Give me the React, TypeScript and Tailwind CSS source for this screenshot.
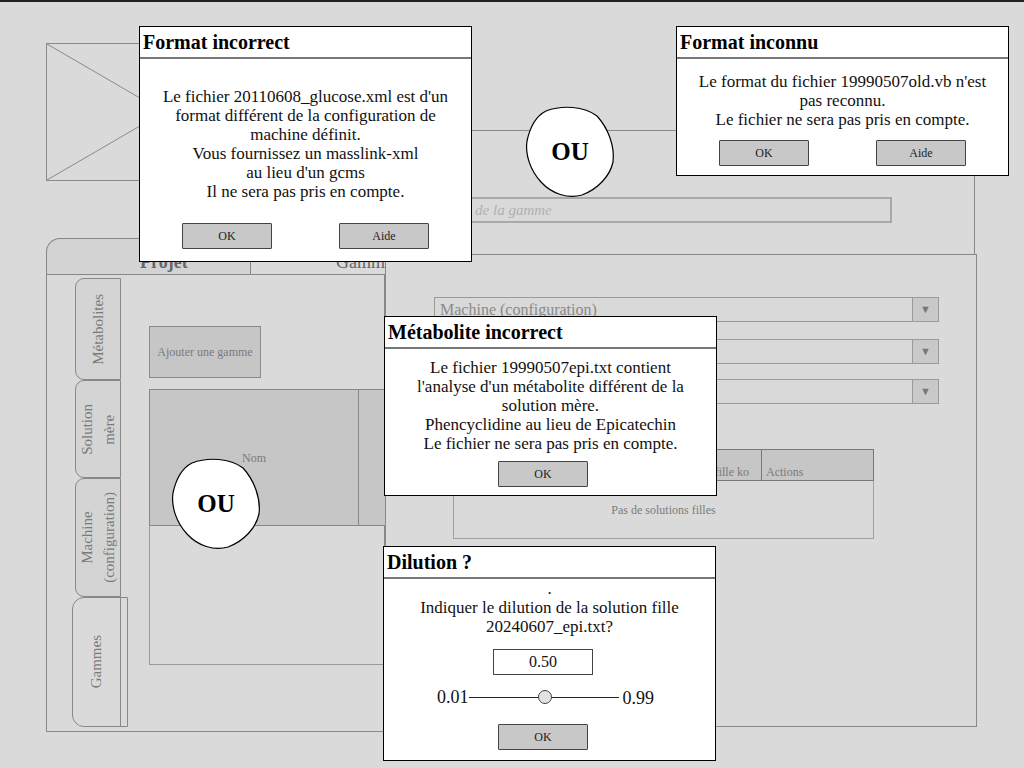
import React from 'react';

const Btn = ({ label, className = '' }: { label: string; className?: string }) => (
  <div className={`w-[90px] h-[26px] flex items-center justify-center bg-[#c8c8c8] border-[1.5px] border-[#444] rounded-[1px] text-[12px] text-[#222] ${className}`}>
    {label}
  </div>
);

const Dialog = ({ title, className, children }: { title: string; className: string; children: React.ReactNode }) => (
  <div className={`absolute bg-white border border-black flex flex-col ${className}`}>
    <div className="h-[32px] shrink-0 border-b-2 border-[#777] pl-[3px] flex items-center text-[20px] font-bold text-black leading-none">
      {title}
    </div>
    {children}
  </div>
);

const Blob = ({ className }: { className: string }) => (
  <div className={`absolute w-[92px] h-[95px] flex items-center justify-center ${className}`}>
    <svg className="absolute inset-0" width="92" height="95" viewBox="0 0 92 95">
      <path
        d="M 22 7 C 38 1, 60 2, 73 12 C 84 24, 91 42, 89 58 C 86 72, 74 85, 58 91 C 44 95, 28 90, 17 78 C 6 66, 1 50, 3 37 C 6 23, 12 12, 22 7 Z"
        fill="white"
        stroke="black"
        strokeWidth="1.2"
      />
    </svg>
    <span className="relative text-[25px] font-bold text-black">OU</span>
  </div>
);

const VTab = ({ lines, className = '' }: { lines: string[]; className?: string }) => (
  <div className={`w-[46px] border border-[#888] rounded-l-[9px] flex items-center justify-center bg-[#d4d4d4] ${className}`}>
    <div className="[writing-mode:vertical-rl] rotate-180 text-center text-[15px] leading-[22px] text-[#7a7a7a]">
      {lines.map((l) => (
        <div key={l}>{l}</div>
      ))}
    </div>
  </div>
);

const Combo = ({ label, className = '' }: { label?: string; className?: string }) => (
  <div className={`w-[505px] h-[25px] flex border border-[#9a9a9a] bg-[#d9d9d9] ${className}`}>
    <div className="flex-1 pl-[5px] text-[16px] leading-[24px] text-[#8a8a8a] overflow-hidden">{label}</div>
    <div className="w-[26px] border-l border-[#9a9a9a] bg-[#c9c9c9] flex items-center justify-center text-[11px] text-[#777]">▼</div>
  </div>
);

export default function App() {
  return (
    <div className="relative w-[1024px] h-[768px] overflow-hidden bg-[#dadada] border-t-2 border-[#222] font-['Liberation_Serif',serif]">
      {/* background mockup */}
      <div className="flex pl-[46px]">
        <div className="w-[339px] shrink-0 flex flex-col pt-[41px] overflow-hidden">
          <div className="w-[236px] h-[138px] border border-[#8a8a8a]">
            <svg width="234" height="136" viewBox="0 0 234 136">
              <line x1="0" y1="0" x2="234" y2="136" stroke="#8a8a8a" strokeWidth="1" />
              <line x1="0" y1="136" x2="234" y2="0" stroke="#8a8a8a" strokeWidth="1" />
            </svg>
          </div>
          <div className="mt-[57px] h-[36px] flex">
            <div className="w-[205px] shrink-0 h-full border-l border-t border-r border-[#888] rounded-tl-[14px] bg-[#d3d3d3] pl-[93px] pt-[14px] text-[18px] font-bold text-[#666] leading-none">
              Projet
            </div>
            <div className="flex-1 min-w-0 h-full border-t border-[#888] pl-[85px] pt-[14px] text-[18px] text-[#666] leading-none whitespace-nowrap overflow-hidden">
              Gammes
            </div>
          </div>
          <div className="h-[458px] border border-[#888] flex">
            <div className="w-[46px] shrink-0 ml-[28px] mt-[3px] flex flex-col">
              <VTab lines={['Métabolites']} className="h-[102px]" />
              <VTab lines={['Solution', 'mère']} className="h-[98px]" />
              <VTab lines={['Machine', '(configuration)']} className="h-[119px]" />
              <div className="h-[130px] -ml-[3px] w-[56px] shrink-0 flex border border-[#888] rounded-l-[12px]">
                <div className="flex-1 flex items-center justify-center">
                  <div className="[writing-mode:vertical-rl] rotate-180 text-[15px] text-[#7a7a7a]">Gammes</div>
                </div>
                <div className="w-[7px] border-l border-[#888]" />
              </div>
            </div>
            <div className="ml-[28px] pt-[51px] flex flex-col">
              <div className="w-[112px] h-[52px] bg-[#c6c6c6] border border-[#8a8a8a] flex items-center justify-center text-[12px] text-[#7a7a7a]">
                Ajouter une gamme
              </div>
              <div className="mt-[11px] w-[260px]">
                <div className="h-[137px] flex bg-[#c6c6c6] border border-[#888]">
                  <div className="w-[209px] border-r border-[#888] flex items-center justify-center text-[12px] text-[#7a7a7a]">Nom</div>
                  <div className="flex-1" />
                </div>
                <div className="h-[139px] border-l border-r border-b border-[#999]" />
              </div>
            </div>
          </div>
        </div>

        <div className="w-[592px] shrink-0 flex flex-col pt-[128px]">
          <div className="w-[590px] h-[124px] border-t border-l border-r border-[#888] pl-[47px] pt-[66px]">
            <div className="w-[459px] h-[26px] border-2 border-[#a8a8a8] pl-[8px] text-[15px] italic leading-[22px] text-[#b0b0b0]">
              Nom de la gamme
            </div>
          </div>
          <div className="h-[473px] border border-[#888] pl-[48px] pt-[42px] flex flex-col">
            <Combo label="Machine (configuration)" />
            <Combo className="mt-[17px]" />
            <Combo className="mt-[15px]" />
            <div className="mt-[45px] ml-[19px] w-[421px]">
              <div className="h-[32px] flex bg-[#c6c6c6] border border-[#777] text-[12px] text-[#7a7a7a]">
                <div className="w-[110px] border-r border-[#777] pl-[4px] pt-[13px]">Nom</div>
                <div className="w-[198px] border-r border-[#777] pr-[12px] pt-[13px] text-right">Solution fille ko</div>
                <div className="flex-1 pl-[4px] pt-[13px]">Actions</div>
              </div>
              <div className="h-[58px] border-l border-r border-b border-[#a0a0a0] flex items-center justify-center text-[12px] text-[#7a7a7a]">
                Pas de solutions filles
              </div>
            </div>
          </div>
        </div>
      </div>

      {/* dialogs */}
      <Dialog title="Format incorrect" className="left-[139px] top-[24px] w-[333px] h-[236px]">
        <div className="pt-[28px] text-center text-[17px] leading-[19px] text-[#111]">
          <div>Le fichier 20110608_glucose.xml est d'un</div>
          <div>format différent de la configuration de</div>
          <div>machine définit.</div>
          <div>Vous fournissez un masslink-xml</div>
          <div>au lieu d'un gcms</div>
          <div>Il ne sera pas pris en compte.</div>
        </div>
        <div className="mt-[22px] px-[42px] flex justify-between">
          <Btn label="OK" />
          <Btn label="Aide" />
        </div>
      </Dialog>

      <Dialog title="Format inconnu" className="left-[676px] top-[24px] w-[333px] h-[150px]">
        <div className="pt-[13px] text-center text-[17px] leading-[19px] text-[#111]">
          <div>Le format du fichier 19990507old.vb n'est</div>
          <div>pas reconnu.</div>
          <div>Le fichier ne sera pas pris en compte.</div>
        </div>
        <div className="mt-[11px] px-[42px] flex justify-between">
          <Btn label="OK" />
          <Btn label="Aide" />
        </div>
      </Dialog>

      <Dialog title="Métabolite incorrect" className="left-[384px] top-[314px] w-[333px] h-[180px]">
        <div className="pt-[9px] text-center text-[17px] leading-[19px] text-[#111]">
          <div>Le fichier 19990507epi.txt contient</div>
          <div>l'analyse d'un métabolite différent de la</div>
          <div>solution mère.</div>
          <div>Phencyclidine au lieu de Epicatechin</div>
          <div>Le fichier ne sera pas pris en compte.</div>
        </div>
        <Btn label="OK" className="mt-[8px] ml-[113px]" />
      </Dialog>

      <Dialog title="Dilution ?" className="left-[383px] top-[544px] w-[333px] h-[215px]">
        <div className="text-center text-[17px] leading-[19px] text-[#111]">
          <div>.</div>
          <div>Indiquer le dilution de la solution fille</div>
          <div>20240607_epi.txt?</div>
        </div>
        <div className="mt-[13px] ml-[109px] w-[100px] h-[26px] border-[1.5px] border-[#444] flex items-center justify-center text-[16px] text-[#111]">
          0.50
        </div>
        <div className="mt-[10px] ml-[53px] h-[24px] flex items-center text-[18px] text-[#111]">
          <span>0.01</span>
          <div className="w-[69px] h-px bg-[#222]" />
          <div className="w-[14px] h-[14px] rounded-full bg-[#e2e2e2] border border-[#444]" />
          <div className="w-[67px] h-px bg-[#222]" />
          <span className="ml-[4px] mt-[2px]">0.99</span>
        </div>
        <Btn label="OK" className="mt-[15px] ml-[114px]" />
      </Dialog>

      <Blob className="left-[524px] top-[102px]" />
      <Blob className="left-[170px] top-[454px]" />
    </div>
  );
}
